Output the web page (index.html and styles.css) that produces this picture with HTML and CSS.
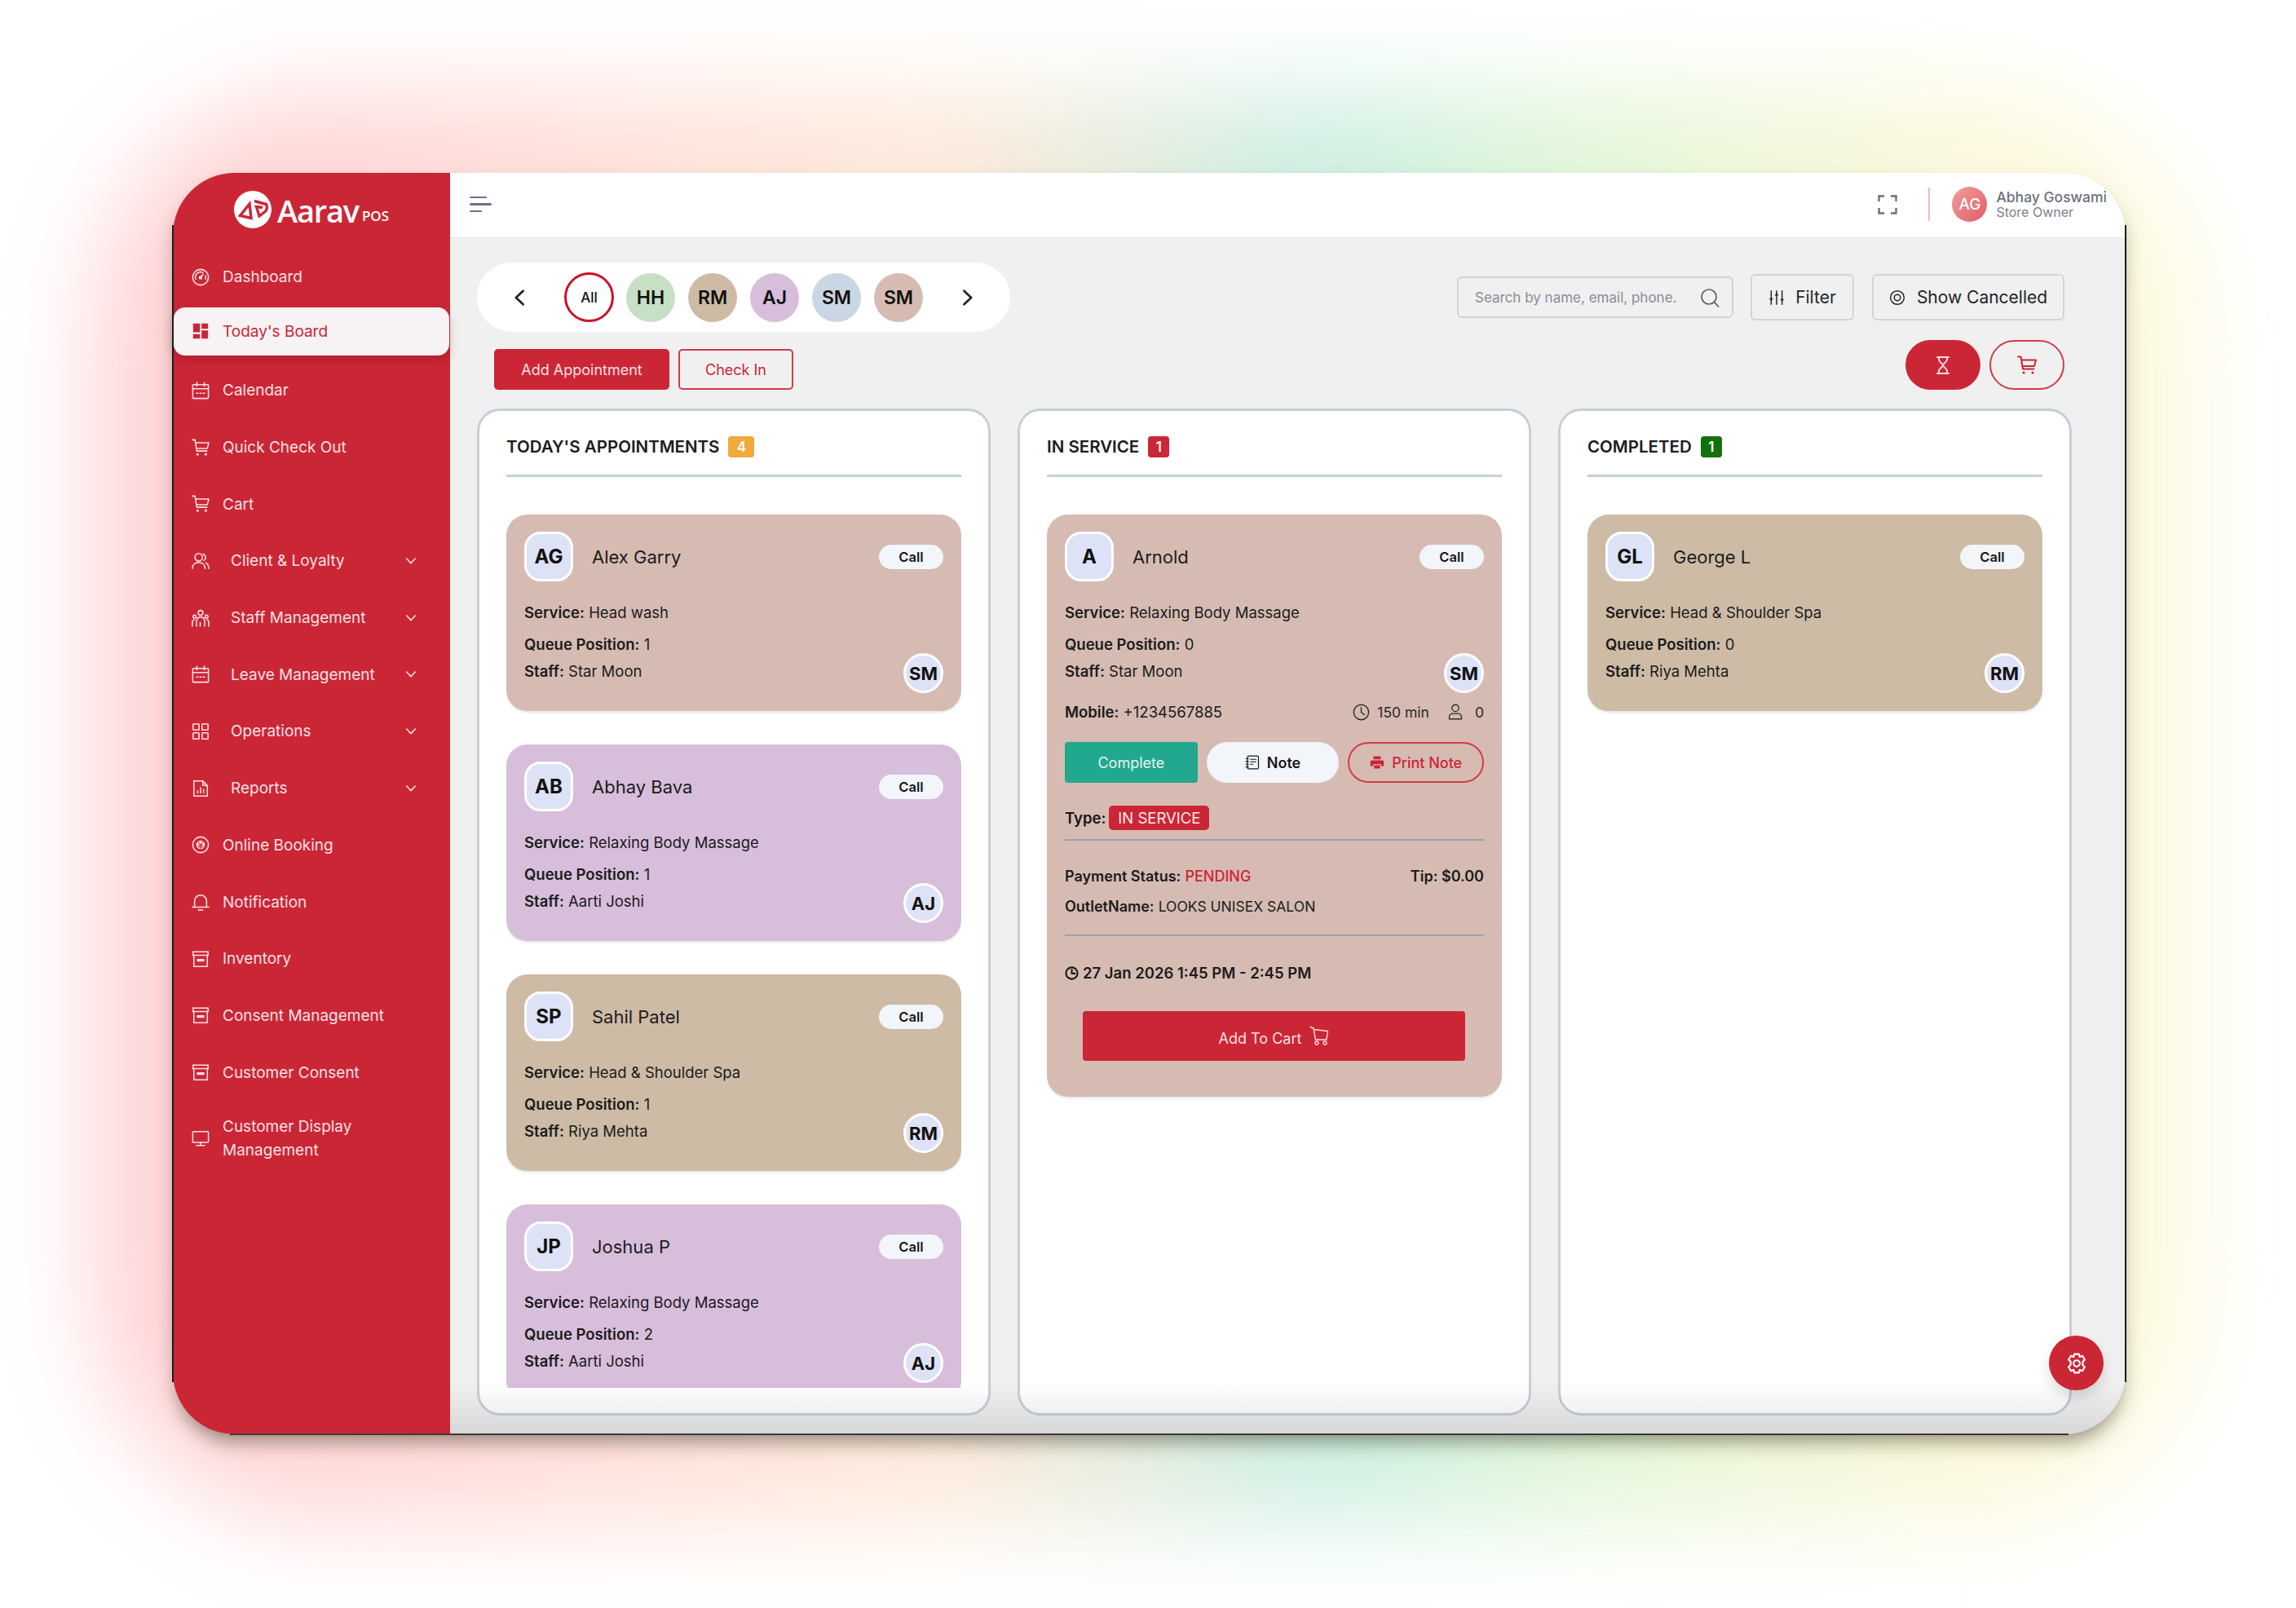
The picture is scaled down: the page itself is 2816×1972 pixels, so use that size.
FILE: index.html
```html
<!DOCTYPE html>
<html lang="en">
<head>
<meta charset="utf-8">
<title>Aarav POS - Today's Board</title>
<link rel="stylesheet" href="styles.css">
</head>
<body>
<svg class="sprite" xmlns="http://www.w3.org/2000/svg">
  <symbol id="i-gauge" viewBox="0 0 24 24"><circle cx="12" cy="12" r="10.5"/><path d="M5.5 14.5a7 7 0 0 1 9.5-8.8M18.6 10a7 7 0 0 1-.1 4.5M10.6 13.6 15.5 8"/><circle cx="12" cy="12.6" r="1.6"/></symbol>
  <symbol id="i-board" viewBox="0 0 24 24"><path class="fill" d="M2 2h9.200v11.500H2zM13.300 2H22v7H13.300zM2 16h9.200v6H2zM13.300 11.300H22V22H13.300z"/></symbol>
  <symbol id="i-cal" viewBox="0 0 24 24"><rect x="1.500" y="4" width="21" height="18.500" rx="1"/><path d="M1.500 9.500h21M7 1v5M17 1v5M6.500 15.500h2M11 15.500h2M15.500 15.500h2"/></symbol>
  <symbol id="i-cart" viewBox="0 0 24 24"><path d="M1 1.500h3.500L7 16.500h13.500M5.200 5.500H23l-2 7.500H6.500"/><circle class="fill" cx="8" cy="21" r="1.600"/><circle class="fill" cx="19" cy="21" r="1.600"/></symbol>
  <symbol id="i-client" viewBox="0 0 24 24"><circle cx="9.500" cy="7" r="5"/><path d="M1 22c0-5 3.500-8 8.500-8s8.500 3 8.500 8M15.500 2.500a5 5 0 0 1 1 8.800M19 14.500c2.500 1.300 4 4 4 7.500"/></symbol>
  <symbol id="i-staff" viewBox="0 0 24 24"><circle cx="12" cy="5" r="3.200"/><circle cx="4" cy="10" r="2"/><circle cx="20" cy="10" r="2"/><path d="M6.500 23v-7a5.500 5.500 0 0 1 11 0v7M11.500 23v-5M1 23v-5.500a3 3 0 0 1 2.500-3M23 23v-5.500a3 3 0 0 0-2.500-3"/></symbol>
  <symbol id="i-grid" viewBox="0 0 24 24"><rect x="2" y="2" width="8" height="8" rx=".8"/><rect x="14" y="2" width="8" height="8" rx=".8"/><rect x="2" y="14" width="8" height="8" rx=".8"/><rect x="14" y="14" width="8" height="8" rx=".8"/></symbol>
  <symbol id="i-report" viewBox="0 0 24 24"><path d="M3 2h12l6 6v14H3zM15 2v6h6M8 18v-3M12 18v-7M16 18v-5"/></symbol>
  <symbol id="i-online" viewBox="0 0 24 24"><circle cx="12" cy="12" r="10.500"/><circle class="fill" cx="12" cy="12" r="5.800"/><path class="cut" d="M9 8.500 12 12l3-3.500M12 12v5M9 13h6M9 15.200h6"/></symbol>
  <symbol id="i-bell" viewBox="0 0 24 24"><path d="M1 19h22M4 19v-8a8 8 0 0 1 16 0v8M9 23h6"/></symbol>
  <symbol id="i-box" viewBox="0 0 24 24"><path d="M2 2.500h20M1.500 7h21M3 7v15h18V7"/><rect class="fill" x="7" y="12" width="10" height="3.500"/><path d="M2 2.500V7M22 2.500V7"/></symbol>
  <symbol id="i-monitor" viewBox="0 0 24 24"><rect x="1.500" y="3" width="21" height="14.500" rx="1.200"/><path d="M12 17.500V21M6.500 21.500h11"/></symbol>
  <symbol id="i-chev" viewBox="0 0 24 24"><path d="M3 7l9 9.500L21 7"/></symbol>
  <symbol id="i-search" viewBox="0 0 24 24"><circle cx="11" cy="11" r="9"/><path d="M17.500 17.500 22.500 23"/></symbol>
  <symbol id="i-sliders" viewBox="0 0 24 24"><path d="M4 2v20M12 2v20M20 2v20"/><path class="fill" d="M1 13h6l-3 4zM9 9h6l-3-4zM17 14h6l-3 4z"/></symbol>
  <symbol id="i-eye" viewBox="0 0 24 24"><circle cx="12" cy="12" r="10"/><circle cx="12" cy="12" r="4.500"/></symbol>
  <symbol id="i-glass" viewBox="0 0 24 24"><path d="M5 2h14M5 22h14M7 2v3c0 3 5 5 5 7s-5 4-5 7v3M17 2v3c0 3-5 5-5 7s5 4 5 7v3"/></symbol>
  <symbol id="i-gear" viewBox="0 0 24 24"><path d="M9.500 1.500h5l1 3.200 3-1.200 2.600 4.300-2.300 2.400 0 3.600 2.300 2.400-2.600 4.300-3-1.200-1 3.200h-5l-1-3.200-3 1.200L2.900 16l2.300-2.400V10L2.900 7.800l2.600-4.300 3 1.200z"/><circle cx="12" cy="12" r="3.500"/></symbol>
  <symbol id="i-clock" viewBox="0 0 24 24"><circle cx="12" cy="12" r="10.500"/><path d="M12 5.500V12l4.500 3.500"/></symbol>
  <symbol id="i-user" viewBox="0 0 24 24"><circle cx="12" cy="6.500" r="5"/><path d="M3 22.500v-3c0-3 2.500-5 5-5h8c2.500 0 5 2 5 5v3z"/></symbol>
  <symbol id="i-note" viewBox="0 0 24 24"><rect x="4" y="1.500" width="18" height="21" rx="2"/><path d="M1.500 6h4M1.500 10.500h4M1.500 15h4M1.500 19.500h4M9 7h9M9 11h9M9 15h4"/></symbol>
  <symbol id="i-print" viewBox="0 0 24 24"><path class="fill" d="M6 2h12v5H6zM3 8.500h18a2 2 0 0 1 2 2V18h-4.500v-3h-13v3H1v-7.500a2 2 0 0 1 2-2zM7 16.500h10V22H7z"/></symbol>
  <symbol id="i-cart2" viewBox="0 0 24 24"><path d="M1 1.500 5 3l2.500 14H21l1.500-10.500L5.500 4.500"/><circle cx="9" cy="21" r="2"/><circle cx="19" cy="21" r="2"/></symbol>
</svg>

<div class="glow"></div>

<div class="window">
  <aside class="sidebar">
    <div class="brand">
      <svg class="brand-mark" viewBox="0 0 46 46"><circle class="brand-disc" cx="23" cy="23" r="23"/><path class="brand-tri" d="M19 16 7.500 30.500 21 33.500z"/><path class="brand-p" d="M25 12.500 39.500 16.500Q42 22 37.500 26L31 31 27.500 19.500 35 20.500"/></svg>
      <span class="brand-name">Aarav</span><span class="brand-pos">POS</span>
    </div>
    <nav class="nav">
      <a class="nav-item"><svg class="ico"><use href="#i-gauge"/></svg><span>Dashboard</span></a>
      <a class="nav-item active"><svg class="ico"><use href="#i-board"/></svg><span>Today's Board</span></a>
      <a class="nav-item"><svg class="ico"><use href="#i-cal"/></svg><span>Calendar</span></a>
      <a class="nav-item"><svg class="ico"><use href="#i-cart"/></svg><span>Quick Check Out</span></a>
      <a class="nav-item"><svg class="ico"><use href="#i-cart"/></svg><span>Cart</span></a>
      <a class="nav-item sub"><svg class="ico"><use href="#i-client"/></svg><span>Client &amp; Loyalty</span><svg class="chev"><use href="#i-chev"/></svg></a>
      <a class="nav-item sub"><svg class="ico"><use href="#i-staff"/></svg><span>Staff Management</span><svg class="chev"><use href="#i-chev"/></svg></a>
      <a class="nav-item sub"><svg class="ico"><use href="#i-cal"/></svg><span>Leave Management</span><svg class="chev"><use href="#i-chev"/></svg></a>
      <a class="nav-item sub"><svg class="ico"><use href="#i-grid"/></svg><span>Operations</span><svg class="chev"><use href="#i-chev"/></svg></a>
      <a class="nav-item sub"><svg class="ico"><use href="#i-report"/></svg><span>Reports</span><svg class="chev"><use href="#i-chev"/></svg></a>
      <a class="nav-item"><svg class="ico"><use href="#i-online"/></svg><span>Online Booking</span></a>
      <a class="nav-item"><svg class="ico"><use href="#i-bell"/></svg><span>Notification</span></a>
      <a class="nav-item"><svg class="ico"><use href="#i-box"/></svg><span>Inventory</span></a>
      <a class="nav-item"><svg class="ico"><use href="#i-box"/></svg><span>Consent Management</span></a>
      <a class="nav-item"><svg class="ico"><use href="#i-box"/></svg><span>Customer Consent</span></a>
      <a class="nav-item wrap"><svg class="ico"><use href="#i-monitor"/></svg><span>Customer Display<br>Management</span></a>
    </nav>
  </aside>

  <main class="main">
    <header class="topbar">
      <button class="burger" aria-label="Menu"><i></i><i></i><i></i></button>
      <div class="top-right">
        <svg class="expand" viewBox="0 0 24 24"><path d="M1.500 8V1.500H8M16 1.500h6.500V8M22.500 16v6.500H16M8 22.500H1.500V16"/></svg>
        <span class="top-sep"></span>
        <span class="user-avatar">AG</span>
        <div class="user">
          <div class="user-name">Abhay Goswami</div>
          <div class="user-role">Store Owner</div>
        </div>
      </div>
    </header>

    <div class="content">
      <div class="toolbar">
        <div class="staff-pill">
          <svg class="arrow"><use href="#i-chev"/></svg>
          <div class="staff-list">
            <span class="staff-chip all">All</span>
            <span class="staff-chip c-green">HH</span>
            <span class="staff-chip c-tan">RM</span>
            <span class="staff-chip c-lilac">AJ</span>
            <span class="staff-chip c-blue">SM</span>
            <span class="staff-chip c-rose">SM</span>
          </div>
          <svg class="arrow next"><use href="#i-chev"/></svg>
        </div>
        <div class="tools">
          <div class="search">
            <span class="search-text">Search by name, email, phone.</span>
            <svg class="search-ico"><use href="#i-search"/></svg>
          </div>
          <button class="tool-btn filter"><svg class="tool-ico"><use href="#i-sliders"/></svg>Filter</button>
          <button class="tool-btn cancelled"><svg class="tool-ico eye"><use href="#i-eye"/></svg>Show Cancelled</button>
        </div>
      </div>

      <div class="actions">
        <div class="actions-left">
          <button class="btn primary add">Add Appointment</button>
          <button class="btn outline checkin">Check In</button>
        </div>
        <div class="actions-right">
          <button class="round solid"><svg class="round-ico"><use href="#i-glass"/></svg></button>
          <button class="round ghost"><svg class="round-ico"><use href="#i-cart"/></svg></button>
        </div>
      </div>

      <div class="board">
        <section class="col">
          <h2 class="col-head">TODAY'S APPOINTMENTS <span class="count amber">4</span></h2>
          <div class="col-list">
            <article class="card rose">
              <div class="card-top"><span class="avatar">AG</span><span class="client">Alex Garry</span><button class="call">Call</button></div>
              <div class="card-body"><div class="lines">
                <p class="line first"><b>Service:</b> Head wash</p>
                <p class="line queue"><b>Queue Position:</b> 1</p>
                <p class="line staff"><b>Staff:</b> Star Moon</p>
              </div><span class="staff-avatar">SM</span></div>
            </article>
            <article class="card lilac">
              <div class="card-top"><span class="avatar">AB</span><span class="client">Abhay Bava</span><button class="call">Call</button></div>
              <div class="card-body"><div class="lines">
                <p class="line first"><b>Service:</b> Relaxing Body Massage</p>
                <p class="line queue"><b>Queue Position:</b> 1</p>
                <p class="line staff"><b>Staff:</b> Aarti Joshi</p>
              </div><span class="staff-avatar">AJ</span></div>
            </article>
            <article class="card tan">
              <div class="card-top"><span class="avatar">SP</span><span class="client">Sahil Patel</span><button class="call">Call</button></div>
              <div class="card-body"><div class="lines">
                <p class="line first"><b>Service:</b> Head &amp; Shoulder Spa</p>
                <p class="line queue"><b>Queue Position:</b> 1</p>
                <p class="line staff"><b>Staff:</b> Riya Mehta</p>
              </div><span class="staff-avatar">RM</span></div>
            </article>
            <article class="card lilac">
              <div class="card-top"><span class="avatar">JP</span><span class="client">Joshua P</span><button class="call">Call</button></div>
              <div class="card-body"><div class="lines">
                <p class="line first"><b>Service:</b> Relaxing Body Massage</p>
                <p class="line queue"><b>Queue Position:</b> 2</p>
                <p class="line staff"><b>Staff:</b> Aarti Joshi</p>
              </div><span class="staff-avatar">AJ</span></div>
            </article>
          </div>
        </section>

        <section class="col">
          <h2 class="col-head">IN SERVICE <span class="count red">1</span></h2>
          <div class="col-list">
            <article class="card rose">
              <div class="card-top"><span class="avatar">A</span><span class="client">Arnold</span><button class="call">Call</button></div>
              <div class="card-body"><div class="lines">
                <p class="line first"><b>Service:</b> Relaxing Body Massage</p>
                <p class="line queue"><b>Queue Position:</b> 0</p>
                <p class="line staff"><b>Staff:</b> Star Moon</p>
              </div><span class="staff-avatar">SM</span></div>
              <div class="meta">
                <p class="line"><b>Mobile:</b> +1234567885</p>
                <div class="meta-right">
                  <svg class="meta-ico"><use href="#i-clock"/></svg><span class="meta-mins">150 min</span>
                  <svg class="meta-ico person"><use href="#i-user"/></svg><span>0</span>
                </div>
              </div>
              <div class="card-actions">
                <button class="ca complete">Complete</button>
                <button class="ca note"><svg class="ca-ico"><use href="#i-note"/></svg>Note</button>
                <button class="ca print"><svg class="ca-ico"><use href="#i-print"/></svg>Print Note</button>
              </div>
              <div class="type-row"><b>Type:</b><span class="type-badge">IN SERVICE</span></div>
              <hr class="rule">
              <div class="pay-row"><p class="line small"><b>Payment Status:</b> <span class="pending">PENDING</span></p><p class="line small"><b>Tip: $0.00</b></p></div>
              <p class="line small outlet"><b>OutletName:</b> <span class="outlet-name">LOOKS UNISEX SALON</span></p>
              <hr class="rule second">
              <p class="line when"><svg class="when-ico" viewBox="0 0 24 24"><circle cx="12" cy="12" r="10"/><path d="M12 6v6.500h5.500"/></svg><b>27 Jan 2026 1:45 PM - 2:45 PM</b></p>
              <button class="add-cart"><span>Add To Cart</span><svg class="add-cart-ico"><use href="#i-cart2"/></svg></button>
            </article>
          </div>
        </section>

        <section class="col">
          <h2 class="col-head">COMPLETED <span class="count green">1</span></h2>
          <div class="col-list">
            <article class="card tan">
              <div class="card-top"><span class="avatar">GL</span><span class="client">George L</span><button class="call">Call</button></div>
              <div class="card-body"><div class="lines">
                <p class="line first"><b>Service:</b> Head &amp; Shoulder Spa</p>
                <p class="line queue"><b>Queue Position:</b> 0</p>
                <p class="line staff"><b>Staff:</b> Riya Mehta</p>
              </div><span class="staff-avatar">RM</span></div>
            </article>
          </div>
        </section>
      </div>
    </div>
    <button class="fab" aria-label="Settings"><svg class="fab-ico"><use href="#i-gear"/></svg></button>
  </main>
</div>
</body>
</html>
```
FILE: styles.css
```css
* { box-sizing: border-box; }
html, body { margin: 0; height: 100%; }
body {
  width: 2816px;
  height: 1972px;
  padding: 212px 0 0 212px;
  background: #fff;
  font-family: "Inter", "Liberation Sans", sans-serif;
  color: #161616;
  overflow: hidden;
  position: relative;
}
button { font: inherit; border: 0; background: none; padding: 0; color: inherit; }
p { margin: 0; }
h2 { margin: 0; }

.sprite { display: none; }
svg { fill: none; stroke: currentColor; stroke-width: 1.8; stroke-linecap: round; stroke-linejoin: round; display: block; }
.fill { fill: currentColor; stroke: none; }
.cut { stroke: #cb2636; stroke-width: 1.2; fill: none; }

.glow {
  position: absolute;
  left: 120px;
  top: 115px;
  width: 2580px;
  height: 1750px;
  border-radius: 280px;
  background: linear-gradient(90deg, #ff9aa0 0%, #ffb5ae 20%, #fdd0b0 40%, #8fdcc0 58%, #c6ecaa 72%, #f7efb0 88%, #fbf3bc 100%);
  filter: blur(60px);
  opacity: .47;
}

.window {
  position: relative;
  display: flex;
  width: 2395px;
  height: 1547px;
  border-radius: 76px;
  background: #f0f0f0;
  box-shadow: 0 14px 24px -6px rgba(40, 40, 20, .5);
}
.window::before {
  content: "";
  position: absolute;
  inset: 64px -1px 64px -1px;
  border-left: 2px solid #1c1c1c;
  border-right: 2px solid #1c1c1c;
  z-index: 3;
  pointer-events: none;
}
.window::after {
  content: "";
  position: absolute;
  left: 70px;
  right: 70px;
  bottom: -1px;
  border-bottom: 2px solid #3a3a3a;
  z-index: 3;
}

/* sidebar */
.sidebar {
  width: 340px;
  flex: none;
  background: #cb2636;
  border-radius: 76px 0 0 76px;
  padding-top: 22px;
  color: #f8e0e3;
}
.brand { display: flex; align-items: flex-end; height: 46px; padding-left: 75px; }
.brand-mark { width: 46px; height: 46px; flex: none; stroke: none; }
.brand-disc { fill: #fff; }
.brand-tri, .brand-p { fill: none; stroke: #cb2636; stroke-width: 3.4; stroke-linejoin: miter; stroke-linecap: butt; }
.brand-name { margin-left: 7px; font-family: "Open Sans", sans-serif; font-size: 38px; line-height: 44px; font-weight: 600; color: #fff; letter-spacing: -1.2px; }
.brand-pos { margin-left: 4px; font-family: "Open Sans", sans-serif; font-size: 17px; line-height: 31px; font-weight: 600; color: #fff; }
.nav { margin-top: 25px; }
.nav-item {
  display: flex;
  align-items: center;
  min-height: 69.7px;
  padding-left: 23px;
  font-size: 19px;
  line-height: 29px;
  white-space: nowrap;
}
.nav-item.active {
  min-height: 59px;
  margin: 2.300px 1px 8px;
  padding-left: 22px;
  background: #f7f2f3;
  color: #cb2636;
  border-radius: 14px;
  box-shadow: 0 6px 12px rgba(120, 10, 25, .28);
}
.nav-item.wrap { padding: 17px 0 18px 23px; }
.ico { width: 22px; height: 22px; flex: none; margin-right: 16px; stroke-width: 1.7; }
.sub .ico { margin-right: 26px; }
.chev { width: 14px; height: 14px; margin-left: auto; margin-right: 41px; stroke-width: 2.6; }

/* main */
.main { position: relative; flex: 1; min-width: 0; display: flex; flex-direction: column; border-radius: 0 76px 76px 0; overflow: hidden; }
.main::after {
  content: "";
  position: absolute;
  left: 0;
  right: 0;
  bottom: 0;
  height: 64px;
  background: linear-gradient(180deg, rgba(0, 0, 0, 0), rgba(0, 0, 0, .1));
  pointer-events: none;
}
.topbar {
  flex: none;
  height: 80px;
  background: #fff;
  border-bottom: 1px solid #e6e6e6;
  display: flex;
  align-items: center;
  padding: 0 23px 2px 24px;
}
.burger { display: flex; flex-direction: column; gap: 6px; width: 27px; }
.burger i { display: block; height: 2.500px; background: #6b7085; border-radius: 2px; width: 21px; }
.burger i:nth-child(2) { width: 27px; }
.burger i:nth-child(3) { width: 15px; }
.top-right { margin-left: auto; display: flex; align-items: center; }
.expand { width: 24px; height: 24px; stroke: #6a6f7d; stroke-width: 2.4; stroke-linecap: butt; stroke-linejoin: miter; }
.top-sep { width: 2px; height: 41px; background: #f0b9b9; margin: 0 27px 0 38px; }
.user-avatar {
  width: 43px; height: 43px; border-radius: 50%;
  background: linear-gradient(135deg, #f0a0a0, #e25a66);
  color: #fff; font-size: 19px; font-weight: 500;
  display: flex; align-items: center; justify-content: center;
}
.user { margin-left: 11px; color: #6c7080; }
.user-name { font-size: 17.500px; line-height: 19px; font-weight: 500; }
.user-role { font-size: 16px; line-height: 18px; color: #7d818d; }

.content { flex: 1; min-height: 0; display: flex; flex-direction: column; padding: 30px 66px 23px 33px; }
.toolbar { display: flex; align-items: center; justify-content: space-between; padding-right: 9px; }
.staff-pill {
  width: 654px; height: 85px; border-radius: 43px; background: #fff;
  display: flex; align-items: center; padding-left: 41px;
}
.arrow { width: 22px; height: 22px; transform: rotate(90deg); stroke: #1b2530; stroke-width: 3; flex: none; }
.arrow.next { transform: rotate(-90deg); margin-left: 44px; }
.staff-list { display: flex; align-items: center; gap: 16px; margin-left: 44px; }
.staff-chip {
  width: 60px; height: 60px; border-radius: 50%;
  display: flex; align-items: center; justify-content: center;
  font-size: 23px; font-weight: 600; color: #111;
}
.staff-chip.all { width: 61px; height: 61px; margin-right: -1px; background: #fff; border: 3px solid #cc1126; font-size: 17px; font-weight: 500; }
.c-green { background: #c6dfc5; }
.c-tan { background: #cdbba6; }
.c-lilac { background: #d7bedb; }
.c-blue { background: #cad6e3; }
.c-rose { background: #d6bbb2; }

.tools { display: flex; align-items: center; gap: 22px; }
.search {
  width: 339px; height: 51px; border: 2px solid #ced4db; border-radius: 6px;
  display: flex; align-items: center; justify-content: space-between; padding: 0 15px 0 20px;
  margin-right: -1px;
}
.search-text { font-size: 17px; color: #888d98; white-space: nowrap; }
.search-ico { width: 24px; height: 24px; stroke: #555b66; stroke-width: 1.7; flex: none; }
.tool-btn {
  height: 57px; border: 2px solid #ced4db; border-radius: 6px;
  display: flex; align-items: center; justify-content: center;
  font-size: 21px; color: #22262b;
}
.filter { width: 127px; }
.cancelled { width: 236px; }
.tool-ico { width: 20px; height: 22px; margin-right: 13px; stroke-width: 1.8; }
.tool-ico.eye { width: 20px; height: 20px; margin-right: 14px; }

.actions { display: flex; align-items: flex-end; justify-content: space-between; padding: 10px 9px 0 21px; }
.actions-left { display: flex; gap: 11px; }
.btn { height: 50px; border-radius: 5px; font-size: 18px; display: flex; align-items: center; justify-content: center; }
.primary { background: #cb2636; color: #f8e0e3; }
.outline { border: 2px solid #cf3d4b; color: #cb2636; }
.add { width: 215px; }
.checkin { width: 141px; }
.actions-right { display: flex; gap: 11px; }
.round { width: 92px; height: 61px; border-radius: 31px; display: flex; align-items: center; justify-content: center; }
.solid { background: #cb2636; color: #f5d7da; }
.ghost { border: 2px solid #cf3d4b; color: #cb2636; }
.round-ico { width: 24px; height: 24px; stroke-width: 2; }

.board { flex: 1; min-height: 0; margin-top: 23px; display: grid; grid-template-columns: repeat(3, minmax(0, 1fr)); gap: 33px; }
.col { background: #fff; border: 3px solid #c6cfd9; border-radius: 28px; padding: 30px 33px 31px; display: flex; flex-direction: column; min-height: 0; }
.col-head {
  flex: none; height: 51px;
  border-bottom: 3px solid #c6cfd9;
  font-size: 20.500px; line-height: 28px; font-weight: 600; color: #1a1d21;
  display: flex; align-items: flex-start; gap: 11px; white-space: nowrap;
}
.count { width: 32px; height: 26px; margin-top: 1px; border-radius: 4px; color: #fff; font-size: 17px; line-height: 26px; font-weight: 600; text-align: center; }
.count.amber { background: #f0a93b; }
.count.red { width: 26px; background: #cb2636; }
.count.green { width: 26px; background: #13700f; }
.col-list { flex: 1; min-height: 0; margin-top: 46px; overflow: hidden; display: flex; flex-direction: column; gap: 41px; }

.card { flex: none; border-radius: 26px; padding: 21px 22px 37px; box-shadow: 0 2px 3px rgba(0, 0, 0, .1); }
.card.rose { background: #d6bbb2; }
.card.lilac { background: #d7bedb; }
.card.tan { background: #cdbba6; }
.card-top { display: flex; align-items: center; }
.avatar {
  width: 60px; height: 61px; flex: none; border-radius: 20px;
  background: #dde2f6; border: 3px solid #fff;
  display: flex; align-items: center; justify-content: center;
  font-size: 24px; font-weight: 700; color: #111;
}
.client { margin-left: 23px; font-size: 22px; color: #1c1c1c; }
.call { margin-left: auto; width: 79px; height: 30px; border-radius: 15px; background: #f2f5f9; font-size: 16.500px; font-weight: 600; color: #161616; }
.card-body { display: flex; align-items: flex-end; justify-content: space-between; }
.line { font-size: 18.500px; line-height: 24px; color: #1b1b1b; white-space: nowrap; }
.line.small { font-size: 18px; }
.line b { font-weight: 600; }
.first { margin-top: 25.500px; }
.queue { margin-top: 15px; }
.staff { margin-top: 9.500px; }
.staff-avatar {
  width: 49px; height: 49px; flex: none; border-radius: 50%; margin-bottom: -15px;
  background: #dde2f6; border: 3px solid #fff;
  display: flex; align-items: center; justify-content: center;
  font-size: 22px; font-weight: 700; color: #111;
}
.meta { display: flex; align-items: center; justify-content: space-between; margin-top: 26px; }
.meta-right { display: flex; align-items: center; font-size: 17.500px; color: #2a2a2a; }
.meta-ico { width: 21px; height: 21px; stroke-width: 1.6; margin-right: 9px; }
.meta-ico.person { width: 20px; height: 20px; margin-right: 14px; }
.meta-mins { margin-right: 22px; }
.card-actions { display: flex; gap: 11px; margin-top: 25px; }
.ca { flex: 1; height: 50px; font-size: 18px; display: flex; align-items: center; justify-content: center; }
.complete { background: #22a88e; color: #e1f6f0; border-radius: 4px; }
.note { background: #f2f5f9; border-radius: 25px; font-weight: 600; color: #161616; }
.print { border: 2px solid #cf3d4b; border-radius: 25px; font-weight: 500; color: #cb2636; }
.ca-ico { width: 18px; height: 18px; margin-right: 9px; stroke-width: 1.6; }
.type-row { display: flex; align-items: center; margin-top: 28px; font-size: 18.500px; }
.type-row b { font-weight: 600; }
.type-badge { margin-left: 4px; height: 30px; padding: 0 11px; border-radius: 5px; background: #cb2636; color: #fde9eb; font-size: 18.500px; line-height: 30px; }
.rule { border: 0; height: 2px; background: #99a2a9; margin: 11px 0 0; }
.pay-row { display: flex; justify-content: space-between; margin-top: 32px; }
.pending { color: #cb2636; font-weight: 500; }
.outlet { margin-top: 13px; }
.outlet-name { font-size: 17.500px; }
.rule.second { margin-top: 22px; }
.when { margin-top: 33px; display: flex; align-items: center; }
.when-ico { width: 17px; height: 17px; margin-right: 5px; stroke-width: 3; }
.add-cart {
  display: flex; align-items: center; justify-content: center;
  width: 469px; height: 61px; margin: 34.500px 22px 7px;
  background: #cb2636; color: #f8e0e3; border-radius: 4px; font-size: 18px;
}
.add-cart span { padding-top: 6px; }
.add-cart-ico { width: 24px; height: 26px; margin-left: 10px; stroke-width: 1.4; }

.fab {
  position: absolute; right: 27px; bottom: 54px; z-index: 2;
  width: 67px; height: 67px; border-radius: 50%;
  background: #cb2636; color: #fff;
  display: flex; align-items: center; justify-content: center;
  box-shadow: 0 8px 16px rgba(0, 0, 0, .14);
}
.fab-ico { width: 26px; height: 26px; stroke-width: 2; }
```
